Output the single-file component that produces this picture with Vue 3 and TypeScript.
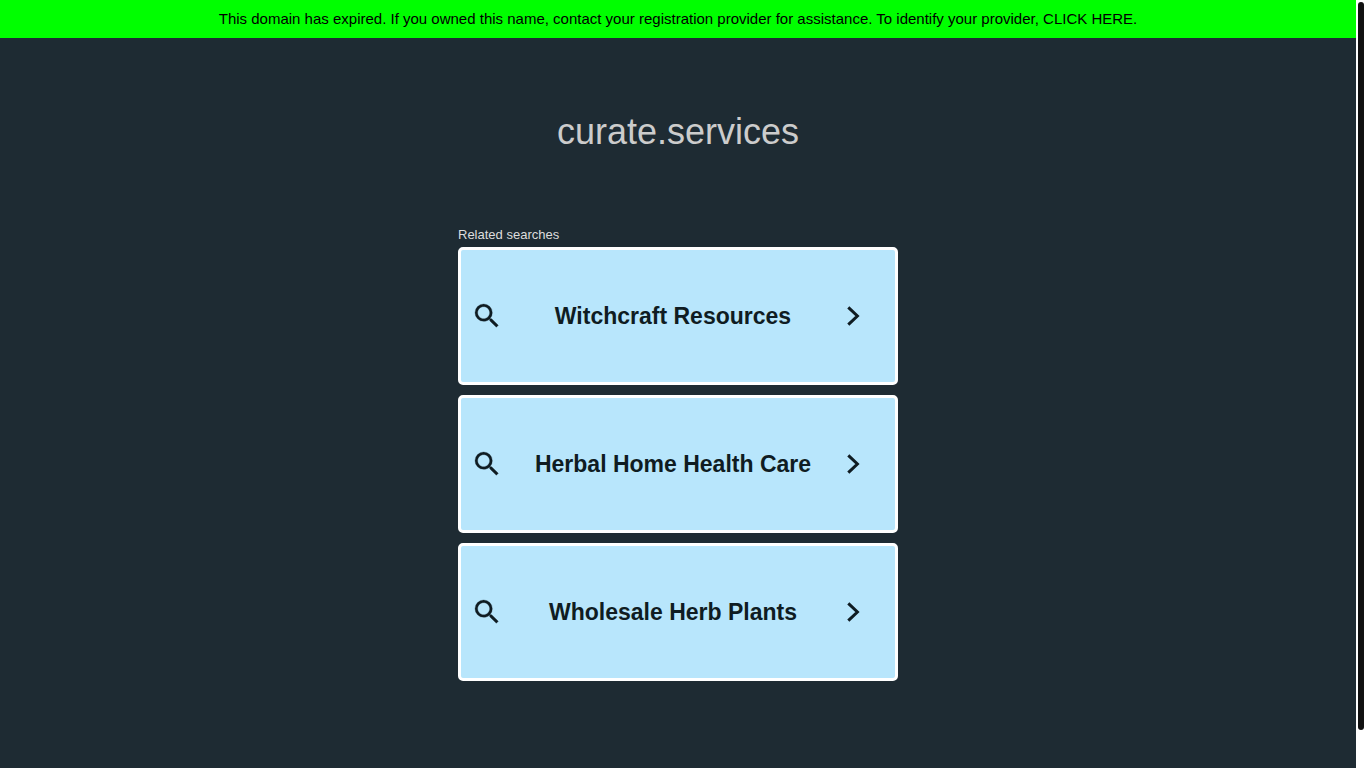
<script setup lang="ts">
interface RelatedSearch {
  id: number
  label: string
}

const domain: string = 'curate.services'

const searches: RelatedSearch[] = [
  { id: 1, label: 'Witchcraft Resources' },
  { id: 2, label: 'Herbal Home Health Care' },
  { id: 3, label: 'Wholesale Herb Plants' },
]
</script>

<template>
  <div class="page">
    <div class="content">
      <header class="banner">
        <a href="#" class="banner-link">This domain has expired. If you owned this name, contact your registration provider for assistance. To identify your provider, CLICK HERE.</a>
      </header>
      <main class="main">
        <h1 class="domain">{{ domain }}</h1>
        <section class="related" aria-labelledby="related-title">
          <h2 id="related-title" class="related-title">Related searches</h2>
          <a v-for="item in searches" :key="item.id" href="#" class="card">
            <svg class="search-icon" viewBox="0 0 24 24" aria-hidden="true">
              <path d="M15.5 14h-.79l-.28-.27A6.471 6.471 0 0 0 16 9.5 6.5 6.5 0 1 0 9.5 16c1.61 0 3.09-.59 4.23-1.57l.27.28v.79l5 4.99L20.49 19l-4.99-5zm-6 0C7.01 14 5 11.99 5 9.5S7.01 5 9.5 5 14 7.01 14 9.5 11.99 14 9.5 14z" />
            </svg>
            <span class="card-label">{{ item.label }}</span>
            <svg class="arrow-icon" viewBox="0 0 24 24" aria-hidden="true">
              <path d="M7.3 3.3 16.4 12 7.3 20.7" />
            </svg>
          </a>
        </section>
      </main>
    </div>
    <div class="scroll-track" aria-hidden="true">
      <div class="scroll-thumb"></div>
    </div>
  </div>
</template>

<style>
body {
  margin: 0;
  background: #1e2b33;
}
</style>

<style scoped>
.page {
  display: flex;
  min-height: 100vh;
  font-family: "Liberation Sans", Arial, sans-serif;
  background: #1e2b33;
}

.content {
  flex: 1;
  min-width: 0;
}

.banner {
  padding: 10px;
  background: #00ff00;
  text-align: center;
  font-size: 15px;
  line-height: 18px;
}

.banner-link {
  color: #000;
  text-decoration: none;
}

.main {
  padding: 72px 10px 0;
}

.domain {
  margin: 0;
  color: #ccc;
  text-align: center;
  font-size: 36px;
  font-weight: 400;
  line-height: 44px;
}

.related {
  display: flex;
  flex-direction: column;
  gap: 10px;
  max-width: 440px;
  margin: 72px auto 0;
}

.related-title {
  margin: 0 0 -6px;
  color: #ddd;
  font-size: 13px;
  font-weight: 400;
  line-height: 17px;
}

.card {
  display: flex;
  align-items: center;
  box-sizing: border-box;
  min-height: 138px;
  padding: 0 30px 0 10px;
  border: 3px solid #fff;
  border-radius: 5px;
  background: #b8e6fc;
  color: #0f1c22;
  text-decoration: none;
}

.card-label {
  flex: 1;
  padding-left: 2px;
  text-align: center;
  font-size: 23px;
  font-weight: 700;
  line-height: 28px;
}

.search-icon {
  width: 32px;
  height: 32px;
  fill: currentColor;
  stroke: currentColor;
  stroke-width: 0.2;
}

.arrow-icon {
  width: 24px;
  height: 24px;
  fill: none;
  stroke: currentColor;
  stroke-width: 3;
}

.scroll-track {
  box-sizing: border-box;
  width: 10px;
  height: 100vh;
  padding: 2px;
  background: #fff;
}

.scroll-thumb {
  height: 95.3%;
  border-radius: 3px;
  background: #111;
}
</style>
